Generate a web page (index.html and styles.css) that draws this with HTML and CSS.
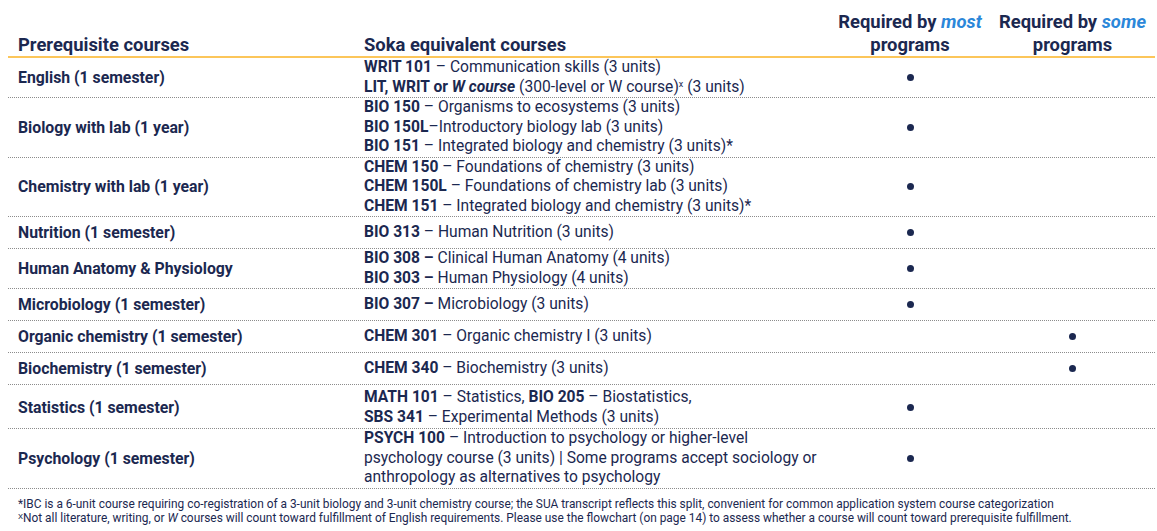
FILE: index.html
```html
<!DOCTYPE html>
<html lang="en">
<head>
<meta charset="utf-8">
<title>Prerequisite courses</title>
<link rel="stylesheet" href="styles.css">
</head>
<body>
<div class="table">
  <div class="row head">
    <div class="cell">Prerequisite courses</div>
    <div class="cell">Soka equivalent courses</div>
    <div class="cell center">Required by <em>most</em><br>programs</div>
    <div class="cell center">Required by <em>some</em><br>programs</div>
  </div>

  <div class="row">
    <div class="cell label">English (1 semester)</div>
    <div class="cell"><b>WRIT 101</b> – Communication skills (3 units)<br><b>LIT, WRIT or <i>W course</i></b> (300-level or W course)<sup>x</sup> (3 units)</div>
    <div class="cell center"><span class="dot"></span></div>
    <div class="cell center"></div>
  </div>

  <div class="row">
    <div class="cell label">Biology with lab (1 year)</div>
    <div class="cell"><b>BIO 150</b> – Organisms to ecosystems (3 units)<br><b>BIO 150L</b>–Introductory biology lab (3 units)<br><b>BIO 151</b> – Integrated biology and chemistry (3 units)*</div>
    <div class="cell center"><span class="dot"></span></div>
    <div class="cell center"></div>
  </div>

  <div class="row">
    <div class="cell label">Chemistry with lab (1 year)</div>
    <div class="cell"><b>CHEM 150</b> – Foundations of chemistry (3 units)<br><b>CHEM 150L</b> – Foundations of chemistry lab (3 units)<br><b>CHEM 151</b> – Integrated biology and chemistry (3 units)*</div>
    <div class="cell center"><span class="dot"></span></div>
    <div class="cell center"></div>
  </div>

  <div class="row">
    <div class="cell label">Nutrition (1 semester)</div>
    <div class="cell"><b>BIO 313</b> – Human Nutrition (3 units)</div>
    <div class="cell center"><span class="dot"></span></div>
    <div class="cell center"></div>
  </div>

  <div class="row">
    <div class="cell label">Human Anatomy &amp; Physiology</div>
    <div class="cell"><b>BIO 308 –</b> Clinical Human Anatomy (4 units)<br><b>BIO 303 –</b> Human Physiology (4 units)</div>
    <div class="cell center"><span class="dot"></span></div>
    <div class="cell center"></div>
  </div>

  <div class="row">
    <div class="cell label">Microbiology (1 semester)</div>
    <div class="cell"><b>BIO 307 –</b> Microbiology (3 units)</div>
    <div class="cell center"><span class="dot"></span></div>
    <div class="cell center"></div>
  </div>

  <div class="row">
    <div class="cell label">Organic chemistry (1 semester)</div>
    <div class="cell"><b>CHEM 301</b> – Organic chemistry I (3 units)</div>
    <div class="cell center"></div>
    <div class="cell center"><span class="dot"></span></div>
  </div>

  <div class="row">
    <div class="cell label">Biochemistry (1 semester)</div>
    <div class="cell"><b>CHEM 340</b> – Biochemistry (3 units)</div>
    <div class="cell center"></div>
    <div class="cell center"><span class="dot"></span></div>
  </div>

  <div class="row spaced">
    <div class="cell label">Statistics (1 semester)</div>
    <div class="cell"><b>MATH 101</b> – Statistics, <b>BIO 205</b> – Biostatistics,<br><b>SBS 341</b> – Experimental Methods (3 units)</div>
    <div class="cell center"><span class="dot"></span></div>
    <div class="cell center"></div>
  </div>

  <div class="row">
    <div class="cell label">Psychology (1 semester)</div>
    <div class="cell"><b>PSYCH 100</b> – Introduction to psychology or higher-level<br>psychology course (3 units) | Some programs accept sociology or<br>anthropology as alternatives to psychology</div>
    <div class="cell center"><span class="dot"></span></div>
    <div class="cell center"></div>
  </div>
</div>

<div class="notes">
  <p>*IBC is a 6-unit course requiring co-registration of a 3-unit biology and 3-unit chemistry course; the SUA transcript reflects this split, convenient for common application system course categorization</p>
  <p><sup>X</sup>Not all literature, writing, or <i>W</i> courses will count toward fulfillment of English requirements. Please use the flowchart (on page 14) to assess whether a course will count toward prerequisite fulfillment.</p>
</div>
</body>
</html>
```

FILE: styles.css
```css
html, body {
  margin: 0;
  padding: 0;
  background: #ffffff;
}

body {
  padding: 8px 2px 0 8px;
  font-family: Roboto, "Liberation Sans", Arial, sans-serif;
  color: #1b2850;
}

.table {
  display: flex;
  flex-direction: column;
}

.row {
  display: grid;
  grid-template-columns: 346px 476px 160px 165px;
  align-items: center;
  min-height: 31px;
  border-bottom: 1px dotted #8c8c8c;
  font-size: 15.6px;
  line-height: 19.5px;
}

.row.spaced {
  padding: 3px 0 1px;
}

.row.head {
  align-items: end;
  min-height: 0;
  font-size: 18.4px;
  line-height: 23px;
  font-weight: 700;
  padding: 2px 0 0;
  border-bottom: 2.5px solid #fcc65a;
  white-space: nowrap;
}

.row.head .cell.center {
  padding: 0;
}

.row.head em {
  color: #2b87d9;
  font-style: italic;
}

.cell {
  padding: 0 10px;
}

.cell.center {
  text-align: center;
}

.label {
  font-weight: 700;
  font-size: 15.8px;
}

b {
  font-weight: 700;
}

sup {
  font-size: 9px;
  line-height: 0;
  vertical-align: 5px;
}

.dot {
  display: inline-block;
  width: 7px;
  height: 7px;
  border-radius: 50%;
  background: #1b2850;
  vertical-align: middle;
}

.notes {
  padding: 8px 10px 0;
  font-size: 11.9px;
  line-height: 14px;
}

.notes p {
  margin: 0;
}

.notes sup {
  font-size: 8px;
  vertical-align: 3px;
}
```
